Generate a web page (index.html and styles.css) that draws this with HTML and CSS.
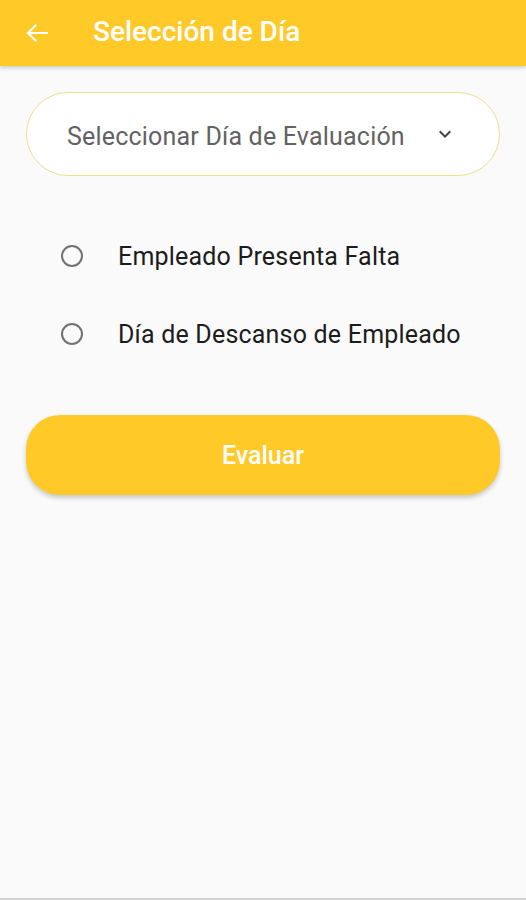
FILE: index.html
```html
<!DOCTYPE html>
<html lang="es">
<head>
<meta charset="utf-8">
<title>Selección de Día</title>
<link rel="stylesheet" href="styles.css">
</head>
<body>
<div class="screen">
  <header class="appbar">
    <span class="back" aria-label="Atrás">
      <svg width="22" height="18" viewBox="0 0 22 18"><path d="M21 9H2M9.5 1.5L2 9l7.5 7.5" fill="none" stroke="#fff" stroke-width="2.2" stroke-linecap="square"/></svg>
    </span>
    <h1 class="title">Selección de Día</h1>
  </header>
  <main class="content">
    <div class="select">
      <span class="select-text">Seleccionar Día de Evaluación</span>
      <svg class="chev" width="24" height="24" viewBox="0 0 24 24"><path d="M7.41 8.59L12 13.17l4.59-4.58L18 10l-6 6-6-6 1.41-1.41z" fill="#444"/></svg>
    </div>
    <div class="options">
      <label class="option"><span class="radio"></span><span class="label">Empleado Presenta Falta</span></label>
      <label class="option"><span class="radio"></span><span class="label">Día de Descanso de Empleado</span></label>
    </div>
    <button class="btn">Evaluar</button>
  </main>
  <div class="navline"></div>
</div>
</body>
</html>
```
FILE: styles.css
```css
* { box-sizing: border-box; }
html, body { margin: 0; padding: 0; }
body {
  background: #fafafa;
  font-family: Roboto, "Noto Sans", sans-serif;
}
.screen {
  height: 900px;
  display: flex;
  flex-direction: column;
}
.appbar {
  height: 66px;
  background: #ffc928;
  display: flex;
  align-items: center;
  padding-left: 26px;
  box-shadow: 0 2px 4px rgba(0,0,0,0.18);
  position: relative;
  z-index: 1;
}
.back { display: flex; width: 22px; height: 18px; margin-top: 0; }
.back svg { width: 22px; height: 18px; }
.title {
  margin: 0 0 0 45px;
  color: #fff;
  font-size: 28px;
  font-weight: 500;
  letter-spacing: 0;
  padding-bottom: 4px;
}
.content {
  flex: 1;
  padding: 26px 26px 0 26px;
  display: flex;
  flex-direction: column;
}
.select {
  height: 84px;
  border: 1.5px solid #e9e18c;
  border-radius: 42px;
  background: #fff;
  display: flex;
  align-items: center;
  padding: 0 42px 0 40px;
  justify-content: space-between;
}
.select-text {
  color: #626262;
  font-size: 25px;
  letter-spacing: 0.2px;
  padding-top: 4px;
}
.chev { width: 24px; height: 24px; }
.options {
  padding-top: 60px;
  display: flex;
  flex-direction: column;
  gap: 38px;
}
.option {
  display: flex;
  align-items: center;
  height: 40px;
  padding-left: 35px;
}
.radio {
  width: 22px;
  height: 22px;
  border: 2px solid #727272;
  border-radius: 50%;
  flex: none;
}
.label {
  margin-left: 35px;
  color: #1c1c1c;
  font-size: 25px;
  letter-spacing: 0.2px;
}
.btn {
  margin-top: 61px;
  height: 80px;
  border: none;
  border-radius: 34px;
  background: #ffc928;
  color: #fff;
  font-family: Roboto, sans-serif;
  font-size: 25px;
  font-weight: 500;
  box-shadow: 0 3px 5px rgba(0,0,0,0.2);
}
.navline {
  height: 2px;
  background: #d0d0d0;
}
```
